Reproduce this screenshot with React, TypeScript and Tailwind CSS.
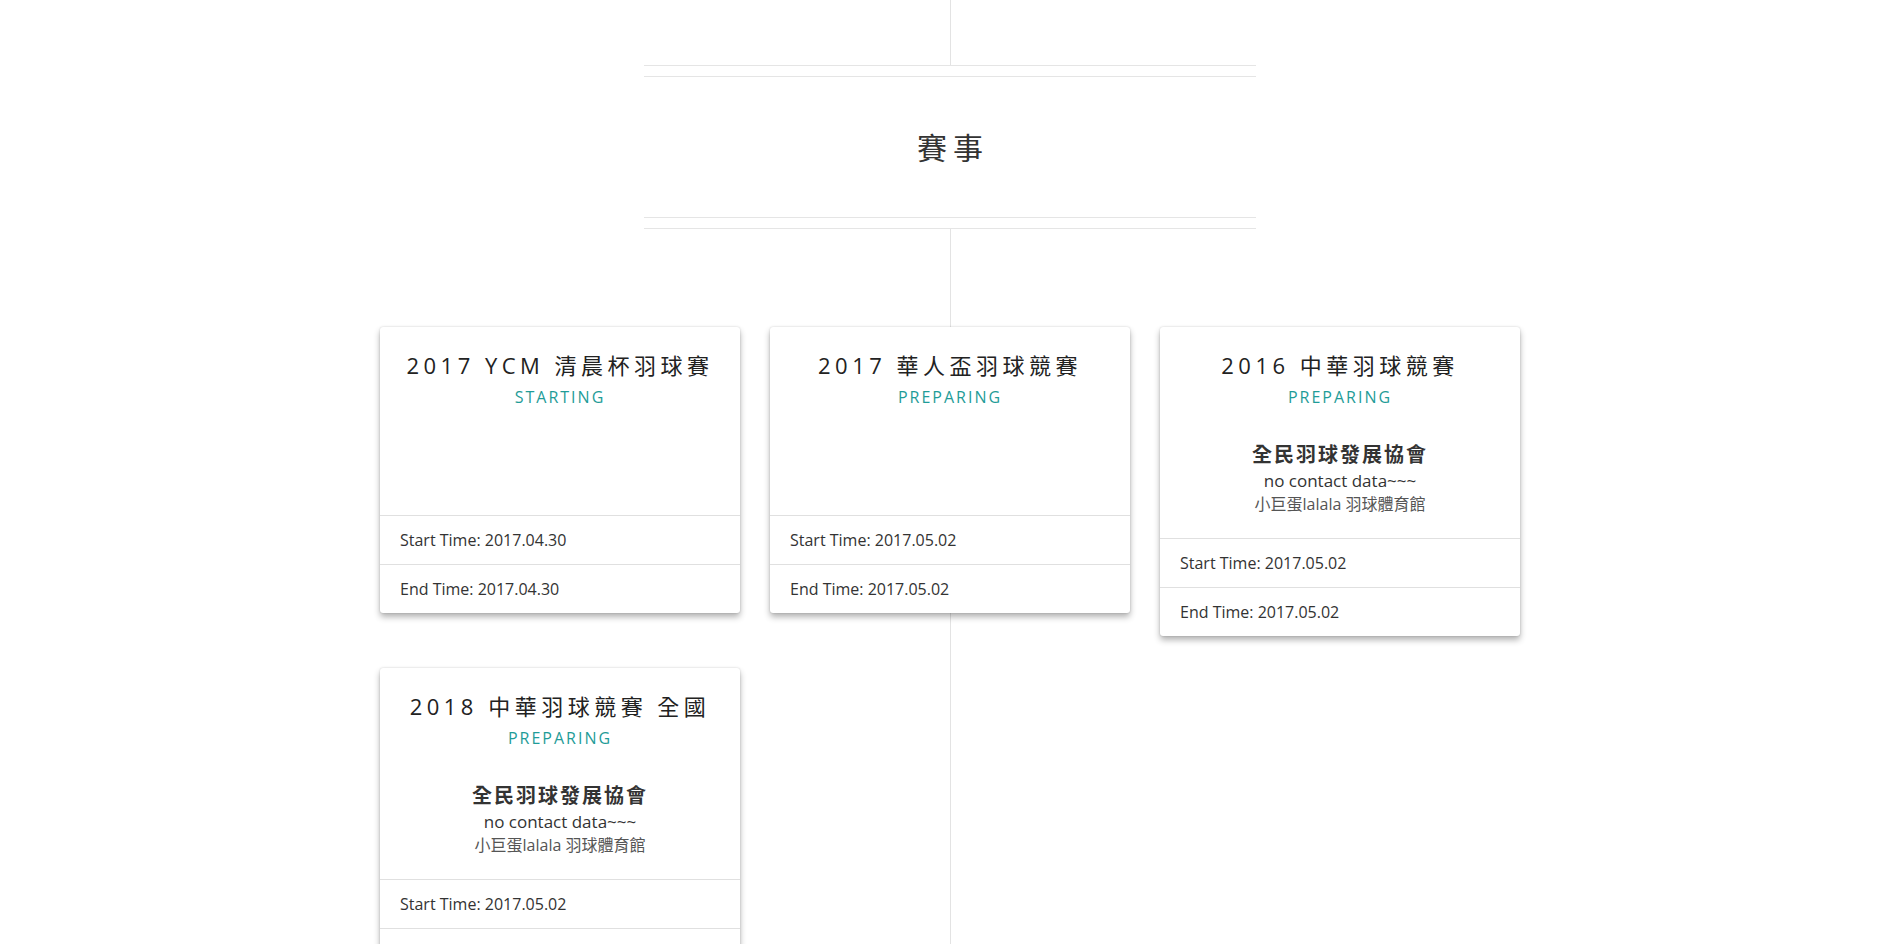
import React from 'react';

type Match = {
  id: number;
  title: string;
  status: string;
  org?: string;
  contact?: string;
  place?: string;
  start: string;
  end: string;
};

const MATCHES: Match[] = [
  { id: 1, title: '2017 YCM 清晨杯羽球賽', status: 'STARTING', start: '2017.04.30', end: '2017.04.30' },
  { id: 2, title: '2017 華人盃羽球競賽', status: 'PREPARING', start: '2017.05.02', end: '2017.05.02' },
  {
    id: 3,
    title: '2016 中華羽球競賽',
    status: 'PREPARING',
    org: '全民羽球發展協會',
    contact: 'no contact data~~~',
    place: '小巨蛋lalala 羽球體育館',
    start: '2017.05.02',
    end: '2017.05.02',
  },
  {
    id: 4,
    title: '2018 中華羽球競賽 全國',
    status: 'PREPARING',
    org: '全民羽球發展協會',
    contact: 'no contact data~~~',
    place: '小巨蛋lalala 羽球體育館',
    start: '2017.05.02',
    end: '2017.05.02',
  },
];

function MatchCard({ match }: { match: Match }) {
  return (
    <div className="bg-white rounded-[3px] shadow-[0_0_2px_rgba(0,0,0,0.18),0_4px_6px_rgba(0,0,0,0.3)] text-center">
      <div className="pt-[22px] px-4">
        <h3 className="text-[22px] leading-[32px] tracking-[4.5px] text-[#222]">{match.title}</h3>
        <p className="mt-1 text-[16px] leading-[24px] tracking-[2px] text-[#1f9c98]">{match.status}</p>
      </div>
      <div className="pt-[32px] pb-[23px] px-4">
        <div className="min-h-[51px]">
          {match.org && (
            <>
              <p className="text-[20px] leading-[28px] font-bold tracking-[2px] text-[#333]">{match.org}</p>
              <p className="text-[17px] leading-[24px] text-[#333]">{match.contact}</p>
              <p className="text-[16px] leading-[22px] text-[#555]">{match.place}</p>
            </>
          )}
        </div>
      </div>
      <div className="text-left text-[16px] text-[#333]">
        <div className="border-t border-[#e0e0e0] px-5 py-3 leading-[24px]">Start Time: {match.start}</div>
        <div className="border-t border-[#e0e0e0] px-5 py-3 leading-[24px]">End Time: {match.end}</div>
      </div>
    </div>
  );
}

export default function App() {
  return (
    <div
      className="min-h-screen bg-white bg-[linear-gradient(#e3e3e3,#e3e3e3)] bg-no-repeat bg-[position:950px_0] bg-[length:1px_100%] pt-[65px] pr-[3px] pb-10"
      style={{ fontFamily: '"Open Sans", "Noto Sans CJK TC", sans-serif' }}
    >
      {/* Section header */}
      <div className="w-[612px] mx-auto bg-white border-t border-b border-[#e5e5e5]">
        <div className="mt-[10px] mb-[10px] h-[142px] border-t border-b border-[#e5e5e5] flex items-center justify-center">
          <h2 className="text-[30px] tracking-[6px] pl-[6px] text-[#333]">賽事</h2>
        </div>
      </div>

      {/* Match cards */}
      <div className="w-[1140px] mx-auto mt-[98px] grid grid-cols-3 gap-x-[30px] gap-y-[32px] items-start">
        {MATCHES.map(m => (
          <MatchCard key={m.id} match={m} />
        ))}
      </div>
    </div>
  );
}
